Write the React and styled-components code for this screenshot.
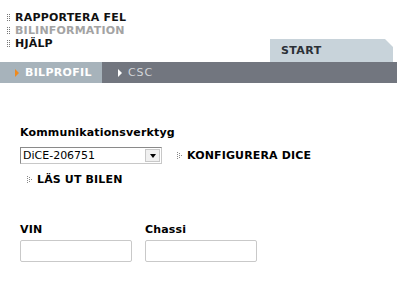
import React from 'react'
import styled, { createGlobalStyle } from 'styled-components'

const GlobalStyle = createGlobalStyle`
  html, body {
    margin: 0;
    padding: 0;
    background: #fff;
  }
  body {
    font-family: "DejaVu Sans", Verdana, sans-serif;
    font-size: 11px;
    color: #000;
  }
`

const navItems = [
  { label: 'RAPPORTERA FEL' },
  { label: 'BILINFORMATION', dim: true },
  { label: 'HJÄLP' },
]

const Grip = () => (
  <svg width="3" height="8" viewBox="0 0 3 8">
    {[0, 2, 4, 6].map(y => (
      <g key={y}>
        <rect x="0" y={y} width="1" height="1" fill="#777" />
        <rect x="2" y={y} width="1" height="1" fill="#777" />
      </g>
    ))}
  </svg>
)

const DotArrow = () => (
  <svg width="5" height="7" viewBox="0 0 5 7">
    {[[0, 0], [0, 2], [0, 4], [0, 6], [2, 1], [2, 3], [2, 5], [4, 3]].map(([x, y]) => (
      <rect key={`${x}-${y}`} x={x} y={y} width="1" height="1" fill="#888" />
    ))}
  </svg>
)

const App = () => {
  return (
    <Page>
      <GlobalStyle />
      <Header>
        <NavList>
          {navItems.map(item => (
            <NavItem key={item.label} dim={item.dim}>
              <Grip />
              <span>{item.label}</span>
            </NavItem>
          ))}
        </NavList>
        <StartTab>START</StartTab>
      </Header>
      <TabBar>
        <Tab active>
          <Triangle active />
          BILPROFIL
        </Tab>
        <Tab>
          <Triangle />
          CSC
        </Tab>
      </TabBar>
      <Content>
        <Label>Kommunikationsverktyg</Label>
        <ToolRow>
          <Select>
            <SelectValue>DiCE-206751</SelectValue>
            <SelectButton><DownArrow /></SelectButton>
          </Select>
          <ActionLink>
            <DotArrow />
            KONFIGURERA DICE
          </ActionLink>
        </ToolRow>
        <ReadLink>
          <DotArrow />
          LÄS UT BILEN
        </ReadLink>
        <Fields>
          <Field>
            <Label>VIN</Label>
            <Input />
          </Field>
          <Field>
            <Label>Chassi</Label>
            <Input />
          </Field>
        </Fields>
      </Content>
    </Page>
  )
}

export default App

const Page = styled.div`
  width: 397px;
  height: 287px;
  overflow: hidden;
  background: #fff;
`

const Header = styled.div`
  display: flex;
  justify-content: space-between;
  align-items: flex-end;
  height: 62px;
`

const NavList = styled.div`
  display: flex;
  flex-direction: column;
  align-self: flex-start;
  padding: 11px 0 0 7px;
`

const NavItem = styled.div`
  display: flex;
  align-items: center;
  gap: 5px;
  height: 13px;
  font-weight: bold;
  font-size: 11px;
  letter-spacing: 0.2px;
  color: ${props => props.dim ? '#a3a3a3' : '#111'};
`

const StartTab = styled.div`
  width: 123px;
  height: 23px;
  margin-right: 4px;
  padding-left: 11px;
  display: flex;
  align-items: center;
  box-sizing: border-box;
  background: #c8d3da;
  clip-path: polygon(0 0, 115px 0, 123px 8px, 123px 100%, 0 100%);
  font-weight: bold;
  font-size: 11px;
  letter-spacing: 0.4px;
  color: #2b3036;
`

const TabBar = styled.div`
  display: flex;
  height: 21px;
  background: #72767f;
`

const Tab = styled.div`
  display: flex;
  align-items: center;
  gap: 6px;
  box-sizing: border-box;
  width: ${props => props.active ? '102px' : 'auto'};
  padding-left: ${props => props.active ? '15px' : '16px'};
  background: ${props => props.active ? '#a7b3bb' : 'transparent'};
  font-weight: ${props => props.active ? 'bold' : 'normal'};
  font-size: 11px;
  letter-spacing: ${props => props.active ? '0.3px' : '0.9px'};
  color: ${props => props.active ? '#fff' : '#d2d5d9'};
`

const Triangle = styled.span`
  width: 0;
  height: 0;
  border-top: 4px solid transparent;
  border-bottom: 4px solid transparent;
  border-left: 4px solid ${props => props.active ? '#f08a1c' : '#fff'};
`

const Content = styled.div`
  padding: 43px 0 0 20px;
`

const Label = styled.div`
  font-weight: bold;
  font-size: 11px;
  line-height: 13px;
  letter-spacing: 0.15px;
  color: #000;
`

const ToolRow = styled.div`
  display: flex;
  align-items: center;
  gap: 15px;
  margin-top: 8px;
`

const Select = styled.div`
  display: flex;
  align-items: stretch;
  width: 142px;
  height: 17px;
  box-sizing: border-box;
  border: 1px solid;
  border-color: #8a8a8a #c8c8c8 #c8c8c8 #8a8a8a;
  background: #fff;
`

const SelectValue = styled.div`
  flex: 1;
  display: flex;
  align-items: center;
  padding-left: 2px;
  font-size: 11px;
  color: #000;
`

const SelectButton = styled.div`
  width: 15px;
  margin: 1px;
  display: flex;
  align-items: center;
  justify-content: center;
  background: #f0f0f0;
  border: 1px solid #c8c8c8;
  box-sizing: border-box;
`

const DownArrow = styled.span`
  width: 0;
  height: 0;
  border-left: 3px solid transparent;
  border-right: 3px solid transparent;
  border-top: 4px solid #000;
`

const ActionLink = styled.div`
  display: flex;
  align-items: center;
  gap: 5px;
  font-weight: bold;
  font-size: 11px;
  letter-spacing: 0.15px;
  color: #000;
`

const ReadLink = styled(ActionLink)`
  margin: 9px 0 0 7px;
`

const Fields = styled.div`
  display: flex;
  gap: 13px;
  margin-top: 37px;
`

const Field = styled.div`
  display: flex;
  flex-direction: column;
  gap: 4px;
`

const Input = styled.div`
  width: 112px;
  height: 22px;
  box-sizing: border-box;
  border: 1px solid #c9c9c9;
  border-radius: 2px;
  background: #fff;
`
